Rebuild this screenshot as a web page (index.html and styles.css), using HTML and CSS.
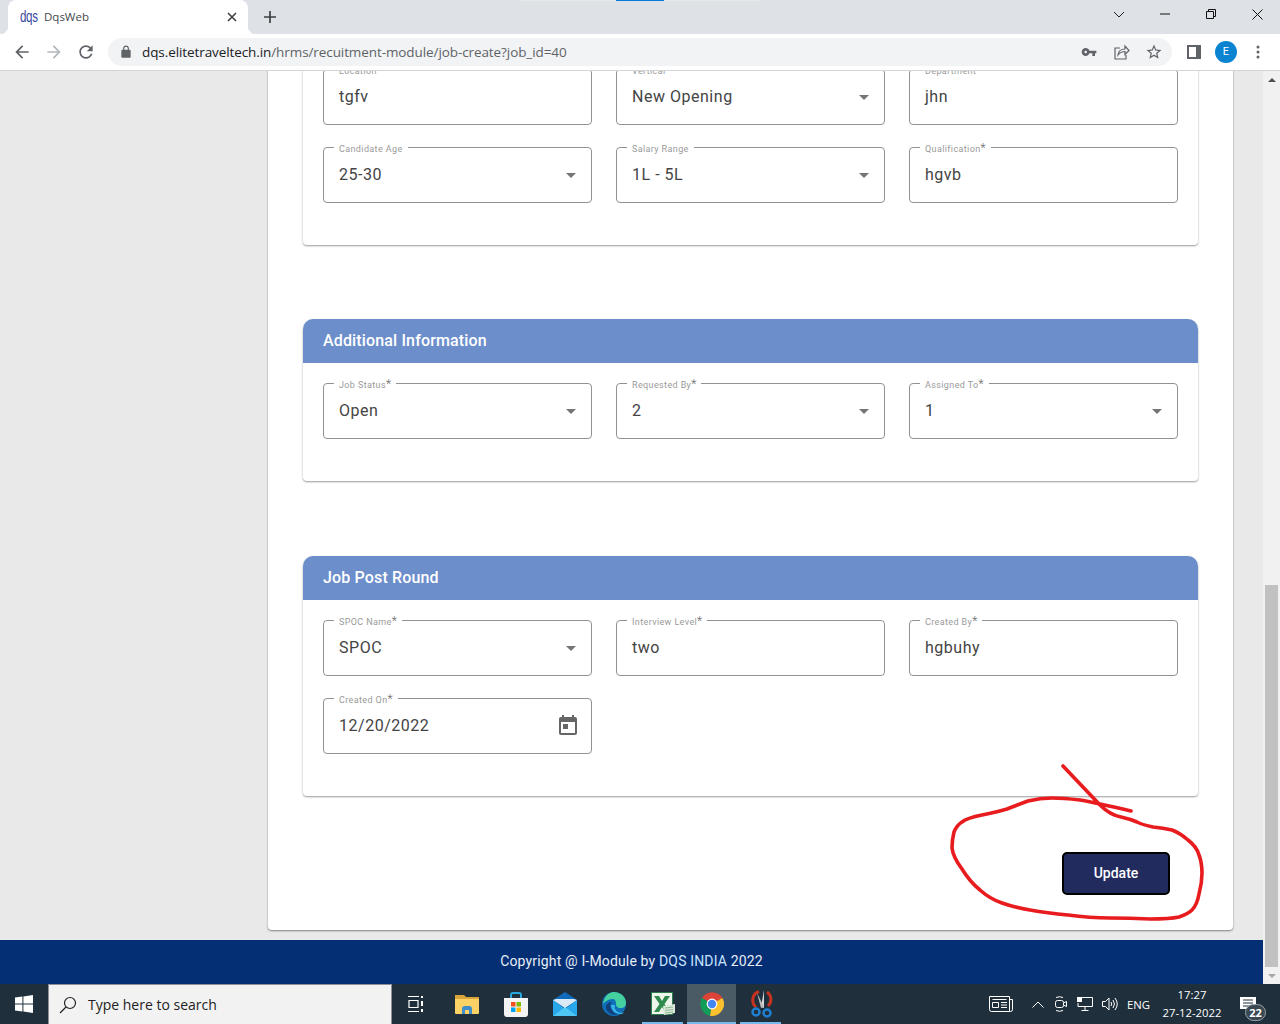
FILE: index.html
```html
<!DOCTYPE html>
<html lang="en">
<head>
  <meta charset="UTF-8">
  <title>DqsWeb</title>
  <link rel="stylesheet" href="styles.css">
</head>
<body>
<div class="window">
  <div class="tabbar">
    <div class="loading-strip"><span></span></div>
    <div class="tab">
      <span class="favicon">dqs</span>
      <span class="tab-title">DqsWeb</span>
      <svg class="tab-close" width="10" height="10" viewBox="0 0 10 10"><path d="M1 1l8 8M9 1l-8 8" stroke="#3c4043" stroke-width="1.6"/></svg>
    </div>
    <svg class="new-tab" width="12" height="12" viewBox="0 0 12 12"><path d="M6 0v12M0 6h12" stroke="#3c4043" stroke-width="1.7"/></svg>
    <div class="win-controls">
      <div class="win-btn"><svg width="12" height="8" viewBox="0 0 12 8"><path d="M1 2l5 5 5-5" fill="none" stroke="#222" stroke-width="1"/></svg></div>
      <div class="win-btn"><svg width="10" height="10" viewBox="0 0 10 10"><path d="M0 5h10" stroke="#111" stroke-width="1"/></svg></div>
      <div class="win-btn"><svg width="10" height="10" viewBox="0 0 10 10"><path d="M.5 2.5h7v7h-7zM2.5 2.5v-2h7v7h-2" fill="none" stroke="#111" stroke-width="1"/></svg></div>
      <div class="win-btn"><svg width="11" height="11" viewBox="0 0 11 11"><path d="M.5.5l10 10M10.500.5l-10 10" stroke="#111" stroke-width="1"/></svg></div>
    </div>
  </div>

  <div class="toolbar">
    <svg class="nav-icon" width="20" height="20" viewBox="0 0 24 24" fill="#5f6368"><path d="M20 11H7.83l5.59-5.59L12 4l-8 8 8 8 1.41-1.41L7.83 13H20v-2z"/></svg>
    <svg class="nav-icon" width="20" height="20" viewBox="0 0 24 24" fill="#b4b7bb"><path d="M4 11h12.17l-5.59-5.59L12 4l8 8-8 8-1.41-1.41L16.170 13H4v-2z"/></svg>
    <svg class="nav-icon" width="20" height="20" viewBox="0 0 24 24" fill="#5f6368"><path d="M17.65 6.35C16.2 4.9 14.21 4 12 4c-4.42 0-7.99 3.58-7.99 8s3.57 8 7.99 8c3.73 0 6.84-2.55 7.730-6h-2.08c-.82 2.33-3.04 4-5.65 4-3.31 0-6-2.69-6-6s2.69-6 6-6c1.66 0 3.14.69 4.22 1.78L13 11h7V4l-2.35 2.35z"/></svg>
    <div class="omnibox">
      <svg width="14" height="14" viewBox="0 0 24 24" fill="#5f6368"><path d="M18 8h-1V6c0-2.76-2.24-5-5-5S7 3.24 7 6v2H6c-1.1 0-2 .9-2 2v10c0 1.1.9 2 2 2h12c1.1 0 2-.9 2-2V10c0-1.1-.9-2-2-2zM9 6c0-1.66 1.34-3 3-3s3 1.34 3 3v2H9V6z"/></svg>
      <div class="url"><span class="url-host">dqs.elitetraveltech.in</span>/hrms/recuitment-module/job-create?job_id=40</div>
      <div class="omni-icons">
        <svg width="16" height="16" viewBox="0 0 24 24" fill="#5f6368"><path d="M12.65 10C11.83 7.67 9.61 6 7 6c-3.31 0-6 2.69-6 6s2.69 6 6 6c2.61 0 4.83-1.67 5.65-4H17v4h4v-4h2v-4H12.65zM7 14c-1.1 0-2-.9-2-2s.9-2 2-2 2 .9 2 2-.9 2-2 2z"/></svg>
        <svg class="omni-share" width="16" height="16" viewBox="0 0 16 16" fill="none" stroke="#5f6368" stroke-width="1.2"><path d="M6 4H1v11h11v-4"/><path d="M4 11c.5-4 3-6 7-6V2l4 4.500-4 4V7.500c-3 0-5 1-7 3.500z"/></svg>
        <svg width="18" height="18" viewBox="0 0 24 24" fill="#5f6368"><path d="M22 9.24l-7.19-.62L12 2 9.19 8.63 2 9.24l5.46 4.73L5.82 21 12 17.270 18.180 21l-1.630-7.030L22 9.240zM12 15.400l-3.760 2.270 1-4.280-3.320-2.880 4.380-.380L12 6.100l1.710 4.040 4.380.380-3.320 2.880 1 4.280L12 15.400z"/></svg>
      </div>
    </div>
    <div class="profile-icons">
      <svg width="14" height="14" viewBox="0 0 14 14"><rect x="1" y="1" width="12" height="12" fill="#fff" stroke="#5f6368" stroke-width="2"/><rect x="9" y="1" width="4" height="12" fill="#5f6368"/></svg>
      <div class="avatar">E</div>
      <svg width="4" height="14" viewBox="0 0 4 14" fill="#5f6368"><circle cx="2" cy="2" r="1.500"/><circle cx="2" cy="7" r="1.500"/><circle cx="2" cy="12" r="1.500"/></svg>
    </div>
  </div>

  <div class="page">
    <div class="page-main">
      <div class="page-body">
        <div class="panel">
          <section class="card">
            <div class="card-body">
              <div class="field"><label>Location</label><span class="value">tgfv</span></div>
              <div class="field"><label>Vertical</label><span class="value">New Opening</span><i class="caret"></i></div>
              <div class="field"><label>Department</label><span class="value">jhn</span></div>
              <div class="field"><label>Candidate Age</label><span class="value">25-30</span><i class="caret"></i></div>
              <div class="field"><label>Salary Range</label><span class="value">1L - 5L</span><i class="caret"></i></div>
              <div class="field"><label>Qualification<b>*</b></label><span class="value">hgvb</span></div>
            </div>
          </section>

          <section class="card card-wide-gap">
            <h2 class="card-head">Additional Information</h2>
            <div class="card-body">
              <div class="field"><label>Job Status<b>*</b></label><span class="value">Open</span><i class="caret"></i></div>
              <div class="field"><label>Requested By<b>*</b></label><span class="value">2</span><i class="caret"></i></div>
              <div class="field"><label>Assigned To<b>*</b></label><span class="value">1</span><i class="caret"></i></div>
            </div>
          </section>

          <section class="card">
            <h2 class="card-head">Job Post Round</h2>
            <div class="card-body">
              <div class="field"><label>SPOC Name<b>*</b></label><span class="value">SPOC</span><i class="caret"></i></div>
              <div class="field"><label>Interview Level<b>*</b></label><span class="value">two</span></div>
              <div class="field"><label>Created By<b>*</b></label><span class="value">hgbuhy</span></div>
              <div class="field"><label>Created On<b>*</b></label><span class="value">12/20/2022</span>
                <svg class="calendar" width="24" height="24" viewBox="0 0 24 24" fill="#666"><path d="M19 3h-1V1h-2v2H8V1H6v2H5c-1.110 0-1.990.9-1.990 2L3 19c0 1.100.89 2 2 2h14c1.100 0 2-.9 2-2V5c0-1.100-.9-2-2-2zm0 16H5V8h14v11zM7 10h5v5H7z"/></svg>
              </div>
            </div>
          </section>

          <div class="actions"><button class="btn-update">Update</button></div>
        </div>
      </div>
      <footer class="footer">Copyright @ I-Module by <span class="footer-link">DQS INDIA</span> 2022</footer>
    </div>
    <div class="scrollbar">
      <div class="scroll-btn"><i class="scroll-up"></i></div>
      <div class="scroll-track"><div class="scroll-thumb"></div></div>
      <div class="scroll-btn"><i class="scroll-down"></i></div>
    </div>
  </div>

  <div class="taskbar">
    <div class="start">
      <svg width="18" height="18" viewBox="0 0 18 18" fill="#fff"><path d="M0 2.600l7.400-1v7H0zM8.400 1.400L18 0v8.600H8.400zM0 9.600h7.400v7l-7.400-1zM8.400 9.600H18V18l-9.600-1.400z"/></svg>
    </div>
    <div class="search">
      <svg width="18" height="18" viewBox="0 0 18 18" fill="none" stroke="#222" stroke-width="1.200"><circle cx="11" cy="7" r="5.500"/><path d="M7 11l-6 6"/></svg>
      <span>Type here to search</span>
    </div>
    <div class="task-icons">
      <div class="task-icon task-view">
        <svg width="18" height="18" viewBox="0 0 18 18" fill="none" stroke="#fff" stroke-width="1.200"><path d="M1 1.500h11M1 16.500h11M2 5.500h9v7H2z"/><path d="M15 1v2M15 6v5M15 14v3" stroke-width="2"/></svg>
      </div>
      <div class="task-icon">
        <svg width="24" height="24" viewBox="0 0 24 24"><path d="M0 3h9l2 2h13v4H0z" fill="#d9a53a"/><path d="M0 7h24v14a1 1 0 0 1-1 1H1a1 1 0 0 1-1-1z" fill="#fbd265"/><path d="M7 22v-5a3 3 0 0 1 3-3h4a3 3 0 0 1 3 3v5h-3v-4h-4v4z" fill="#3d8ecb"/></svg>
      </div>
      <div class="task-icon">
        <svg width="24" height="26" viewBox="0 0 24 26"><path d="M7 7V4a2 2 0 0 1 2-2h6a2 2 0 0 1 2 2v3" fill="none" stroke="#29a8e0" stroke-width="2"/><path d="M0 7h24v16a3 3 0 0 1-3 3H3a3 3 0 0 1-3-3z" fill="#f3f3f3"/><path d="M7 11h4.500v4.500H7z" fill="#f25022"/><path d="M12.500 11H17v4.500h-4.500z" fill="#7fba00"/><path d="M7 16.500h4.500V21H7z" fill="#00a4ef"/><path d="M12.500 16.500H17V21h-4.500z" fill="#ffb900"/></svg>
      </div>
      <div class="task-icon">
        <svg width="24" height="24" viewBox="0 0 24 24"><path d="M0 8L12 0l12 8v16H0z" fill="#0f6cbd"/><path d="M0 8l12 9 12-9v16H0z" fill="#28a8ea"/><path d="M0 24l12-9 12 9z" fill="#50c6f5"/><path d="M0 8l12 8 12-8-3-1H3z" fill="#fff" opacity=".85"/></svg>
      </div>
      <div class="task-icon">
        <svg width="24" height="24" viewBox="0 0 24 24"><circle cx="12" cy="12" r="12" fill="#0f6fb8"/><path d="M12 0c7 0 12 5 12 11 0 3-2 5-5 5-4 0-5-2-5-4 0-3-1-5-3-5-4 0-8 2-10 5C2 5 6 0 12 0z" fill="#45d0a0"/><path d="M9 13c0 5 4 9 9 9 2 0 3-.5 4-1.500-2 .5-4 .5-6-.5-3-1.500-4-4-3-7z" fill="#39b6e8"/><path d="M10 10a5 5 0 0 0-1 6c1 3 4 6 7 6-5 2-11-1-12-6-.5-3 2-6 6-6z" fill="#123f7a"/></svg>
      </div>
      <div class="task-icon task-open">
        <svg width="24" height="24" viewBox="0 0 24 24"><rect x=".5" y=".5" width="21" height="22" fill="#eef5ec" stroke="#2c7c4a"/><path d="M3 4h5l3 5 3-5h5l-5.500 8L19 20h-5l-3-5-3 5H3l5.500-8z" fill="#2f8a4e"/><path d="M12 14l12-2v9l-11 2z" fill="#dbe9d8"/><path d="M14 16l8-1M14 18.500l8-1M14 21l8-1" stroke="#8db795"/></svg>
      </div>
      <div class="task-icon task-open task-active">
        <svg width="24" height="24" viewBox="0 0 24 24"><path d="M12 12L2 6a12 12 0 0 1 20.400 0z" fill="#db4437"/><path d="M12 12L2 6a12 12 0 0 0 8 17.800z" fill="#0f9d58"/><path d="M12 12l10.400-6A12 12 0 0 1 10 23.800z" fill="#fbc02d"/><circle cx="12" cy="12" r="5.400" fill="#fff"/><circle cx="12" cy="12" r="4.200" fill="#4285f4"/></svg>
      </div>
      <div class="task-icon task-open">
        <svg width="24" height="28" viewBox="0 0 24 28"><path d="M7 17A9 9 0 0 1 10 1.500" fill="none" stroke="#c8321e" stroke-width="3"/><path d="M18 2a9 9 0 0 1 1 14" fill="none" stroke="#c8321e" stroke-width="3"/><path d="M15 0l-3 17 3 1z" fill="#d8d8d8"/><path d="M8 3l4 15 3-1z" fill="#bdbdbd"/><circle cx="7" cy="22" r="3.500" fill="none" stroke="#1f7fd0" stroke-width="2.500"/><circle cx="18" cy="23" r="3.500" fill="none" stroke="#1f7fd0" stroke-width="2.500"/></svg>
      </div>
    </div>
    <div class="tray">
      <svg class="tray-news" width="24" height="16" viewBox="0 0 24 16" fill="none" stroke="#fff" stroke-width="1"><path d="M.5.500h20v15H2.500a2 2 0 0 1-2-2zM20.500 3.500h3v10a2 2 0 0 1-2 2h-1"/><path d="M3.500 6.500h6v5h-6z"/><path d="M12 6.500h6M12 9h6M12 11.500h6M3.500 3.500h14"/></svg>
      <svg class="tray-up" width="12" height="7" viewBox="0 0 12 7" fill="none" stroke="#fff" stroke-width="1"><path d="M.5 6.500L6 1l5.500 5.500"/></svg>
      <svg class="tray-cam" width="12" height="16" viewBox="0 0 12 16" fill="none" stroke="#fff" stroke-width="1"><path d="M1 1.500Q4.500 0 8 1.500M1 14.500Q4.500 16 8 14.500"/><rect x=".5" y="4.500" width="8" height="7" rx="2"/><path d="M8.500 7l3-1.500v5L8.500 9"/></svg>
      <svg class="tray-net" width="16" height="14" viewBox="0 0 16 14" fill="none" stroke="#fff" stroke-width="1"><path d="M5 .500h10.500v9H1V6"/><path d="M8 9.500v3.500M4.500 13.500h7"/><rect x=".5" y=".5" width="4" height="4" fill="#fff"/></svg>
      <svg class="tray-vol" width="16" height="14" viewBox="0 0 16 14" fill="none" stroke="#fff" stroke-width="1"><path d="M.5 4.500h3l3.500-3.500v12l-3.500-3.500h-3z"/><path d="M9 5q1.500 2 0 4M11 3q3 4 0 8M13 1q4.500 6 0 12"/></svg>
      <span class="tray-lang">ENG</span>
      <div class="clock"><span>17:27</span><span>27-12-2022</span></div>
      <div class="notify">
        <svg width="16" height="15" viewBox="0 0 16 15"><path d="M0 0h16v12h-3v3l-3-3H0z" fill="#fff"/><path d="M3 3h10M3 6h10M3 9h7" stroke="#1f303c" stroke-width="1"/></svg>
        <span class="notify-badge">22</span>
      </div>
    </div>
  </div>

  <svg class="scribble" width="1280" height="1024" viewBox="0 0 1280 1024" fill="none" stroke="#e81c1f" stroke-width="3.600" stroke-linecap="round" stroke-linejoin="round">
    <path d="M1063 766L1100 805Q1110 815 1121 817Q1130 819 1137 822Q1143 825 1153 827Q1163 828 1172 830Q1180 833 1188 840Q1197 847 1199 855Q1202 863 1202 873Q1202 883 1199 894Q1197 905 1192 910Q1188 914 1179 917Q1170 919 1150 919Q1130 918 1110 918Q1090 918 1068 915Q1047 913 1030 910Q1013 907 1002 903Q990 899 980 890Q970 882 962 869Q953 857 952 848Q952 840 954 832Q957 825 962 822Q967 818 982 815Q997 812 1007 809Q1017 805 1028 801Q1040 798 1052 798Q1063 798 1080 800Q1097 803 1131 811"/>
  </svg>
</div>
</body>
</html>
```

FILE: styles.css
```css
* {
  box-sizing: border-box;
}
body {
  margin: 0;
  font-family: Roboto, sans-serif;
  background: #fff;
}
.window {
  position: relative;
  width: 1280px;
  height: 1024px;
  display: flex;
  flex-direction: column;
  overflow: hidden;
}

/* browser tabs */
.tabbar {
  position: relative;
  flex: 0 0 34px;
  display: flex;
  align-items: center;
  padding-left: 8px;
  background: #dee1e6;
}
.loading-strip {
  position: absolute;
  top: 0;
  left: 520px;
  width: 240px;
  height: 1px;
  background: #e8e8e8;
}
.loading-strip span {
  position: absolute;
  left: 96px;
  width: 48px;
  height: 1px;
  background: #0a7ad8;
}
.tab {
  position: relative;
  width: 240px;
  height: 34px;
  display: flex;
  align-items: center;
  padding: 0 11px 0 12px;
  background: #fff;
  border-radius: 8px 8px 0 0;
}
.tab::before,
.tab::after {
  content: "";
  position: absolute;
  bottom: 0;
  width: 8px;
  height: 8px;
}
.tab::before {
  left: -8px;
  background: radial-gradient(circle at 0 0, #dee1e6 8px, #fff 8.5px);
}
.tab::after {
  right: -8px;
  background: radial-gradient(circle at 100% 0, #dee1e6 8px, #fff 8.5px);
}
.favicon {
  width: 16px;
  font-family: "Liberation Sans", sans-serif;
  font-size: 17px;
  color: #3a4a9c;
  letter-spacing: -0.5px;
  transform: scaleX(0.68);
  transform-origin: left center;
  white-space: nowrap;
}
.tab-title {
  flex: 1;
  margin: -2px 0 0 8px;
  font-family: "Open Sans", sans-serif;
  font-size: 11.500px;
  color: #45474a;
}
.new-tab {
  margin-left: 16px;
}
.win-controls {
  margin-left: auto;
  display: flex;
  align-self: flex-start;
  margin-top: -3px;
}
.win-btn {
  width: 46px;
  height: 34px;
  display: flex;
  align-items: center;
  justify-content: center;
}

/* address bar */
.toolbar {
  flex: 0 0 37px;
  display: flex;
  align-items: center;
  padding: 0 12px 1px 6px;
  background: #fff;
  border-bottom: 1px solid #d3d4d6;
}
.nav-icon {
  margin: 0 6px;
}
.omnibox {
  width: 1064px;
  height: 28px;
  margin-left: 6px;
  display: flex;
  align-items: center;
  padding: 0 9px 0 11px;
  background: #f1f3f4;
  border-radius: 14px;
}
.url {
  margin-left: 9px;
  font-family: "Open Sans", sans-serif;
  font-size: 13.500px;
  letter-spacing: -0.09px;
  color: #5f6368;
  white-space: nowrap;
}
.url-host {
  color: #202124;
}
.omni-icons {
  margin-left: auto;
  display: flex;
  align-items: center;
  gap: 16px;
}
.omni-share {
  margin: 0 -1px 0 1px;
}
.profile-icons {
  flex: 1;
  display: flex;
  align-items: center;
  padding-left: 15px;
}
.avatar {
  width: 22px;
  height: 22px;
  margin: 0 19px 0 14px;
  display: flex;
  align-items: center;
  justify-content: center;
  border-radius: 50%;
  background: #0a84d1;
  color: #fff;
  font-size: 11px;
}

/* page */
.page {
  flex: 1;
  min-height: 0;
  display: flex;
}
.page-main {
  flex: 1;
  min-width: 0;
  display: flex;
  flex-direction: column;
  background: #e9e9e9;
}
.page-body {
  flex: 1;
  min-height: 0;
  overflow: hidden;
  padding: 0 30px 0 268px;
}
.panel {
  margin-top: -22px;
  padding: 0 35px 35px;
  background: #fff;
  border-radius: 0 0 4px 4px;
  box-shadow: 0 1px 2px rgba(0, 0, 0, 0.45);
}
.card {
  margin-bottom: 74px;
  background: #fff;
  border-radius: 10px 10px 4px 4px;
  box-shadow: 0 1px 2px rgba(0, 0, 0, 0.4);
}
.card-wide-gap {
  margin-bottom: 75px;
}
.card:last-of-type {
  margin-bottom: 0;
}
.card-head {
  height: 44px;
  margin: 0;
  padding: 0 20px 2px;
  display: flex;
  align-items: center;
  background: #6c8ecb;
  border-radius: 10px 10px 0 0;
  color: #fff;
  font-size: 16px;
  font-weight: 500;
  letter-spacing: 0.15px;
}
.card-body {
  display: grid;
  grid-template-columns: repeat(3, 1fr);
  gap: 22px 24px;
  padding: 20px 20px 42px;
}
.field {
  position: relative;
  height: 56px;
  display: flex;
  align-items: center;
  justify-content: space-between;
  padding: 0 14px 0 15px;
  border: 1px solid #929292;
  border-radius: 4px;
}
.field label {
  position: absolute;
  top: -4px;
  left: 10px;
  padding: 0 5px;
  background: #fff;
  color: #9a9a9a;
  font-size: 9px;
  line-height: 11px;
  letter-spacing: 0.38px;
}
.field label b {
  position: relative;
  top: 0;
  font-weight: 300;
  font-size: 12px;
  line-height: 8px;
  color: #666;
  letter-spacing: 0;
}
.value {
  margin-top: -2px;
  color: #444;
  font-size: 16px;
  letter-spacing: 0.52px;
}
.caret {
  margin-right: 1px;
  border-left: 5px solid transparent;
  border-right: 5px solid transparent;
  border-top: 5px solid #757575;
}
.calendar {
  margin-right: -3px;
}
.actions {
  display: flex;
  justify-content: flex-end;
  margin-top: 56px;
  padding-right: 28px;
}
.btn-update {
  width: 108px;
  height: 43px;
  padding: 0 0 2px;
  background: #222b5e;
  border: 2px solid #000;
  border-radius: 5px;
  color: #fff;
  font-family: Roboto, sans-serif;
  font-size: 14px;
  font-weight: 500;
}
.footer {
  flex: 0 0 44px;
  display: flex;
  align-items: center;
  justify-content: center;
  padding-bottom: 2px;
  white-space: pre;
  background: #052f75;
  color: #e6edf5;
  font-size: 14px;
  letter-spacing: 0.16px;
}
.footer-link {
  color: #c8e4ff;
}

/* scrollbar */
.scrollbar {
  flex: 0 0 17px;
  display: flex;
  flex-direction: column;
  background: #f1f1f1;
}
.scroll-btn {
  flex: 0 0 17px;
  display: flex;
  align-items: center;
  justify-content: center;
}
.scroll-up {
  border-left: 4px solid transparent;
  border-right: 4px solid transparent;
  border-bottom: 4px solid #505050;
}
.scroll-down {
  border-left: 4px solid transparent;
  border-right: 4px solid transparent;
  border-top: 4px solid #a3a3a3;
}
.scroll-track {
  flex: 1;
  padding: 497px 2px 0;
}
.scroll-thumb {
  height: 382px;
  background: #c1c1c1;
}

/* windows taskbar */
.taskbar {
  flex: 0 0 40px;
  display: flex;
  align-items: stretch;
  background: #1f303c;
  color: #fff;
}
.start {
  flex: 0 0 48px;
  display: flex;
  align-items: center;
  justify-content: center;
}
.search {
  flex: 0 0 344px;
  display: flex;
  align-items: center;
  gap: 11px;
  padding-left: 10px;
  background: #f2f2f2;
  border: 1px solid #8b9197;
  border-bottom: 0;
  color: #222;
  font-family: "Open Sans", sans-serif;
  font-size: 14px;
}
.task-icons {
  display: flex;
  padding-left: 1px;
}
.task-icon {
  position: relative;
  width: 49px;
  display: flex;
  align-items: center;
  justify-content: center;
}
.task-view svg {
  margin-left: -4px;
}
.task-open::after {
  content: "";
  position: absolute;
  left: 4px;
  right: 4px;
  bottom: 0;
  height: 2px;
  background: #76b9ed;
}
.task-active {
  background: #4b5b66;
}
.task-active::after {
  left: 0;
  right: 0;
}
.tray {
  flex: 1;
  display: flex;
  align-items: center;
  padding-left: 204px;
  font-family: "Open Sans", sans-serif;
  font-size: 11.300px;
}
.tray-up {
  margin-left: 19px;
}
.tray-cam {
  margin-left: 11px;
}
.tray-net {
  margin-left: 10px;
}
.tray-vol {
  margin-left: 9px;
}
.tray-lang {
  margin-left: 9px;
}
.clock {
  width: 76px;
  margin-left: 4px;
  display: flex;
  flex-direction: column;
  align-items: center;
  gap: 2px;
  line-height: 16px;
}
.notify {
  position: relative;
  margin-left: 10px;
  display: flex;
}
.notify-badge {
  position: absolute;
  top: 7px;
  left: 5px;
  width: 21px;
  height: 17px;
  display: flex;
  align-items: center;
  justify-content: center;
  background: #3a4852;
  border: 1px solid #9aa2a8;
  border-radius: 9px;
  font-size: 11px;
  font-weight: 700;
}

/* red pen marks on top of the screenshot */
.scribble {
  position: absolute;
  top: 0;
  left: 0;
  pointer-events: none;
}
```
